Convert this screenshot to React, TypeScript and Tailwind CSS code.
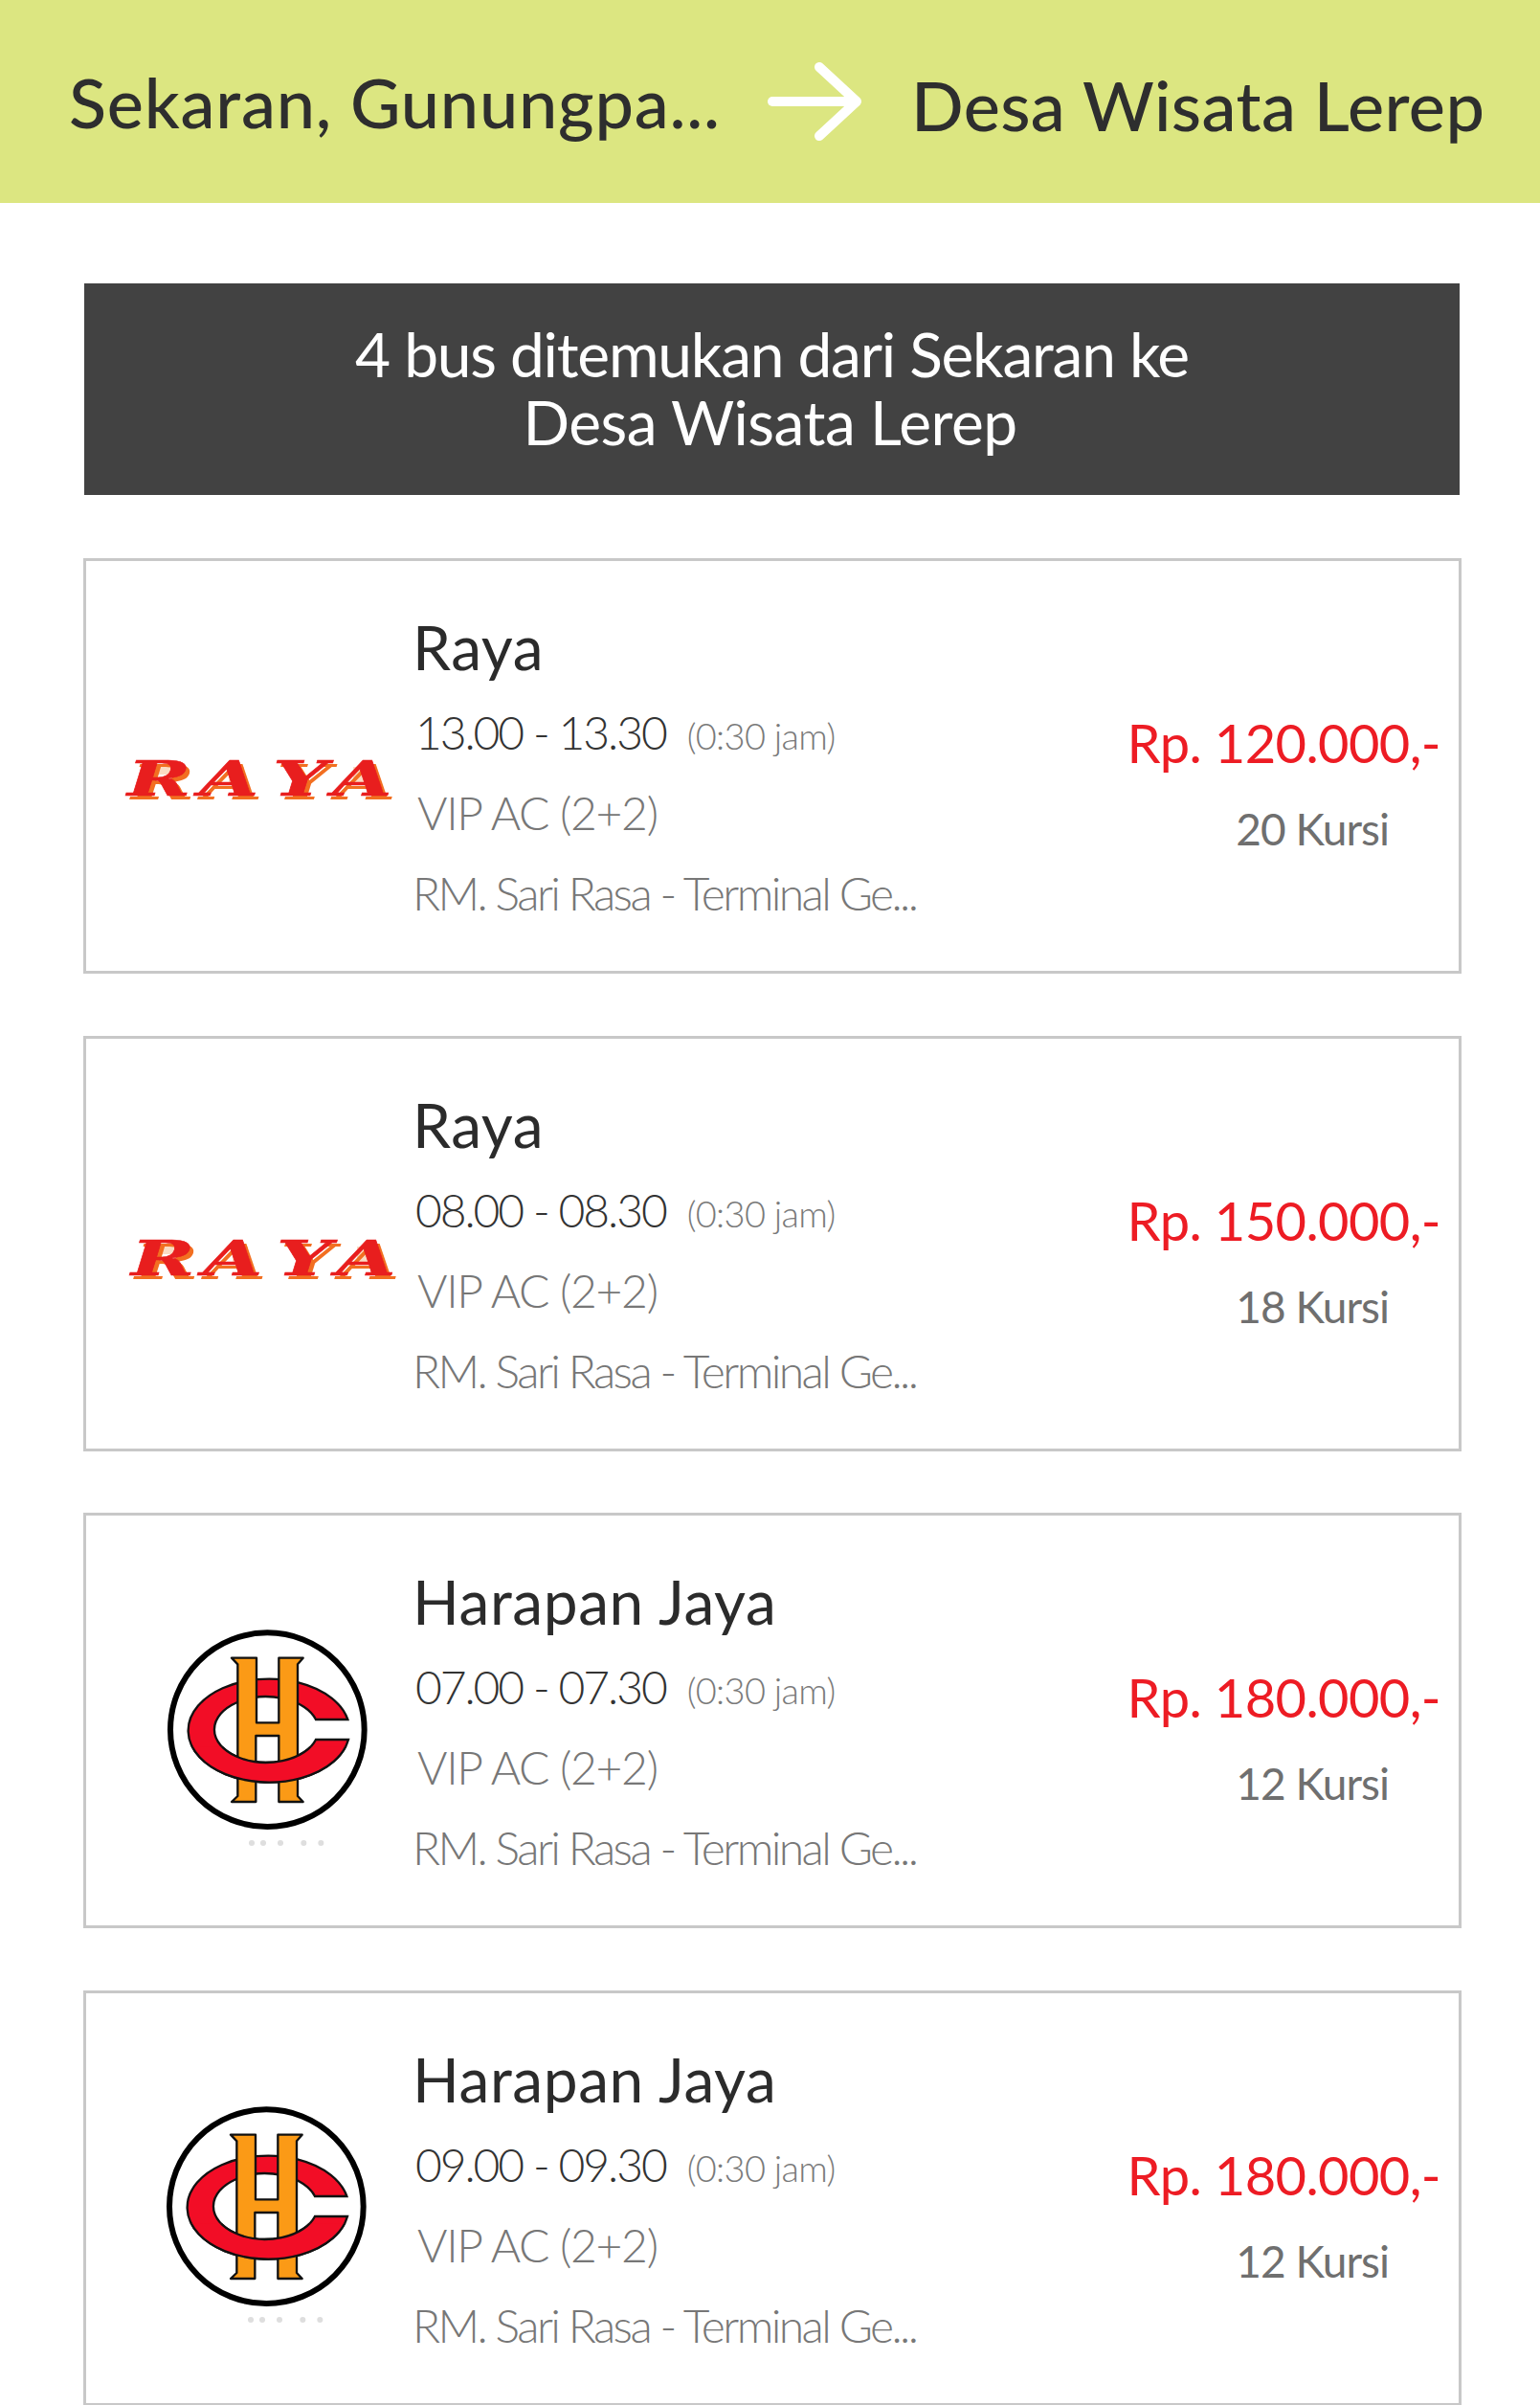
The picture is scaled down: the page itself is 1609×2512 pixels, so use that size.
const trips = [
  { name: "Raya", time: "13.00 - 13.30", price: "Rp. 120.000,-", seats: "20 Kursi", logo: "raya", logoBox: "pl-[43px] pt-[205px]" },
  { name: "Raya", time: "08.00 - 08.30", price: "Rp. 150.000,-", seats: "18 Kursi", logo: "raya", logoBox: "pl-[47px] pt-[207px]" },
  { name: "Harapan Jaya", time: "07.00 - 07.30", price: "Rp. 180.000,-", seats: "12 Kursi", logo: "hj", logoBox: "pl-[70px] pt-[108px]" },
  { name: "Harapan Jaya", time: "09.00 - 09.30", price: "Rp. 180.000,-", seats: "12 Kursi", logo: "hj", logoBox: "pl-[69px] pt-[107px]" },
];

function RayaLogo() {
  const font = { fontFamily: "'DejaVu Serif', serif", fontWeight: 700, fontStyle: "italic", fontSize: 50 };
  const letterX = "0 47 95 134";
  return (
    <svg width="290" height="60" viewBox="0 0 290 60" className="block overflow-visible">
      {/* peach sits behind the red letters so it only shows through the counters */}
      <rect x="24" y="8" width="22" height="10" fill="#fbdcc4" />
      <rect x="106" y="10" width="16" height="16" fill="#fbdcc4" />
      <rect x="236" y="10" width="16" height="16" fill="#fbdcc4" />
      <g transform="translate(4 4) scale(1.6 1)">
        <text x={letterX} y="40" fill="#f26f21" style={font}>
          RAYA
        </text>
      </g>
      <g transform="scale(1.6 1)">
        <text x={letterX} y="40" fill="#e81e1e" stroke="#e81e1e" strokeWidth="0.5" style={font}>
          RAYA
        </text>
      </g>
    </svg>
  );
}

function HarapanLogo() {
  const c = "M610 315 A253 162 0 1 0 612 378 L510 378 A163 103 0 1 1 510 315 Z";
  return (
    <svg width="240" height="260" viewBox="0 0 720 780" className="block">
      <defs>
        <clipPath id="hj-bottom">
          <rect x="0" y="400" width="720" height="200" />
        </clipPath>
      </defs>
      <circle cx="358" cy="347" r="304" fill="#fff" stroke="#000" strokeWidth="18" />
      <path d={c} fill="#f20d26" stroke="#111" strokeWidth="7" />
      <path
        d="M246 122 H324 V325 H394 V122 H470 L453 142 V555 L470 573 H394 V366 H322 V573 H246 L265 555 V142 Z"
        fill="#fb9a16"
        stroke="#111"
        strokeWidth="7"
        strokeLinejoin="round"
      />
      <path d={c} fill="#f20d26" stroke="#111" strokeWidth="7" clipPath="url(#hj-bottom)" />
      {[309, 345, 399, 472, 526].map((x) => (
        <circle key={x} cx={x} cy="702" r="9" fill="#dedede" />
      ))}
    </svg>
  );
}

function TripCard({ trip }: { trip: (typeof trips)[number] }) {
  return (
    <div className="flex h-[434px] border-[3px] border-[#c8c8c8] bg-white">
      <div className={`w-[341px] shrink-0 ${trip.logoBox}`}>
        {trip.logo === "raya" ? <RayaLogo /> : <HarapanLogo />}
      </div>
      <div className="flex-1 pt-[48px]">
        <div className="h-[89px] text-[64px] leading-[83px] tracking-[0.6px] text-[#2b2b2b]">{trip.name}</div>
        <div className="flex h-[84px] items-baseline leading-[83px] font-light">
          <span className="pl-[3px] text-[48px] tracking-[-2.1px] text-[#333333]">{trip.time}</span>
          <span className="ml-[22px] text-[38px] tracking-[-0.7px] text-[#7a7a7a]">(0:30 jam)</span>
        </div>
        <div className="h-[84px] pl-[5px] text-[48px] leading-[83px] font-light tracking-[-1.3px] text-[#777777]">VIP AC (2+2)</div>
        <div className="h-[83px] text-[48px] leading-[83px] font-light tracking-[-2.6px] text-[#777777]">
          RM. Sari Rasa - Terminal Ge...
        </div>
      </div>
      <div className="w-[400px] shrink-0 pt-[146px] pr-[19px] text-right">
        <div className="h-[90px] text-[56px] leading-[87px] tracking-[-0.6px] text-[#ed1c24]">{trip.price}</div>
        <div className="h-[87px] pr-[54px] text-[46px] leading-[87px] tracking-[-1px] text-[#6f6f6f]">{trip.seats}</div>
      </div>
    </div>
  );
}

export default function App() {
  return (
    <div className="h-[2512px] w-[1609px] overflow-hidden bg-white font-['Lato',sans-serif]">
      <header className="flex h-[212px] items-center bg-[#dce681] pl-[72px] text-[#2e2e2e]">
        <span className="w-[730px] text-[72px] font-medium tracking-[0.8px]">Sekaran, Gunungpa...</span>
        <svg width="100" height="84" viewBox="0 0 100 84" className="shrink-0" fill="none" stroke="#ffffff" strokeWidth="10" strokeLinecap="round" strokeLinejoin="round">
          <path d="M5 42 H90" />
          <path d="M54 6 L93 42 L54 78" />
        </svg>
        <span className="mt-[6px] ml-[50px] text-[72px] font-medium tracking-[0.4px]">Desa Wisata Lerep</span>
      </header>
      <main className="flex flex-col gap-[64.5px] pt-[84px] pr-[82px] pl-[87px]">
        <div className="mr-[2px] mb-[1.5px] ml-[1px] flex h-[221px] items-center justify-center bg-[#424242] pb-[3px] text-center text-[64px] leading-[71px] text-white">
          <p>
            <span className="tracking-[-1.2px]">4 bus ditemukan dari Sekaran ke</span>
            <br />
            <span className="pr-[4px] tracking-[-0.5px]">Desa Wisata Lerep</span>
          </p>
        </div>
        {trips.map((trip, i) => (
          <TripCard key={i} trip={trip} />
        ))}
      </main>
    </div>
  );
}
